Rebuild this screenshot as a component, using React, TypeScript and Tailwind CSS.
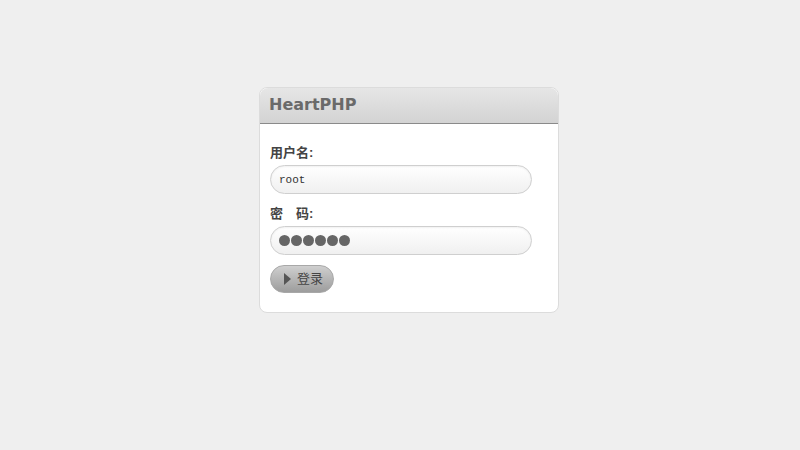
const dots = [0, 1, 2, 3, 4, 5];

export default function App() {
  return (
    <div className="min-h-[450px] w-full bg-[#efefef] pt-[87px] pl-[259px] font-['Liberation_Sans','Noto_Sans_CJK_SC',sans-serif]">
      <div className="w-[300px] rounded-[8px] border border-[#dcdcdc] bg-white">
        <div className="h-[36px] rounded-t-[8px] border-b border-[#8a8a8a] bg-gradient-to-b from-[#e6e6e6] to-[#d3d3d3] pl-[9px] pt-[6px]">
          <h1 className="font-['Verdana','DejaVu_Sans',sans-serif] text-[16px] font-bold leading-[22px] text-[#6a6a6a]">
            HeartPHP
          </h1>
        </div>
        <form className="px-[10px] pt-[21px] pb-[19px]">
          <label className="block text-[13px] font-bold leading-[16px] text-[#444]">用户名:</label>
          <input
            type="text"
            defaultValue="root"
            className="mt-[4px] block h-[29px] w-[262px] rounded-full border border-[#cfcfcf] bg-gradient-to-b from-white to-[#f0f0f0] px-[8px] font-['Liberation_Mono',monospace] text-[11px] text-[#333] shadow-[inset_0_1px_2px_rgba(0,0,0,0.06)] outline-none"
          />
          <label className="mt-[12px] block text-[13px] font-bold leading-[16px] text-[#444]">
            密　码:
          </label>
          <div className="mt-[4px] flex h-[29px] w-[262px] items-center gap-[1px] rounded-full border border-[#cfcfcf] bg-gradient-to-b from-white to-[#f0f0f0] px-[8px] shadow-[inset_0_1px_2px_rgba(0,0,0,0.06)]">
            {dots.map((d) => (
              <span key={d} className="h-[11px] w-[11px] rounded-full bg-[#666]" />
            ))}
          </div>
          <button
            type="button"
            className="mt-[10px] flex h-[28px] w-[64px] items-center gap-[6px] rounded-full border border-[#a8a8a8] bg-gradient-to-b from-[#cfcfcf] to-[#9d9d9d] pl-[13px] text-[13px] text-[#444]"
          >
            <svg width="7" height="12" viewBox="0 0 7 12">
              <path d="M0 0 L7 6 L0 12 Z" fill="#555" />
            </svg>
            <span>登录</span>
          </button>
        </form>
      </div>
    </div>
  );
}
